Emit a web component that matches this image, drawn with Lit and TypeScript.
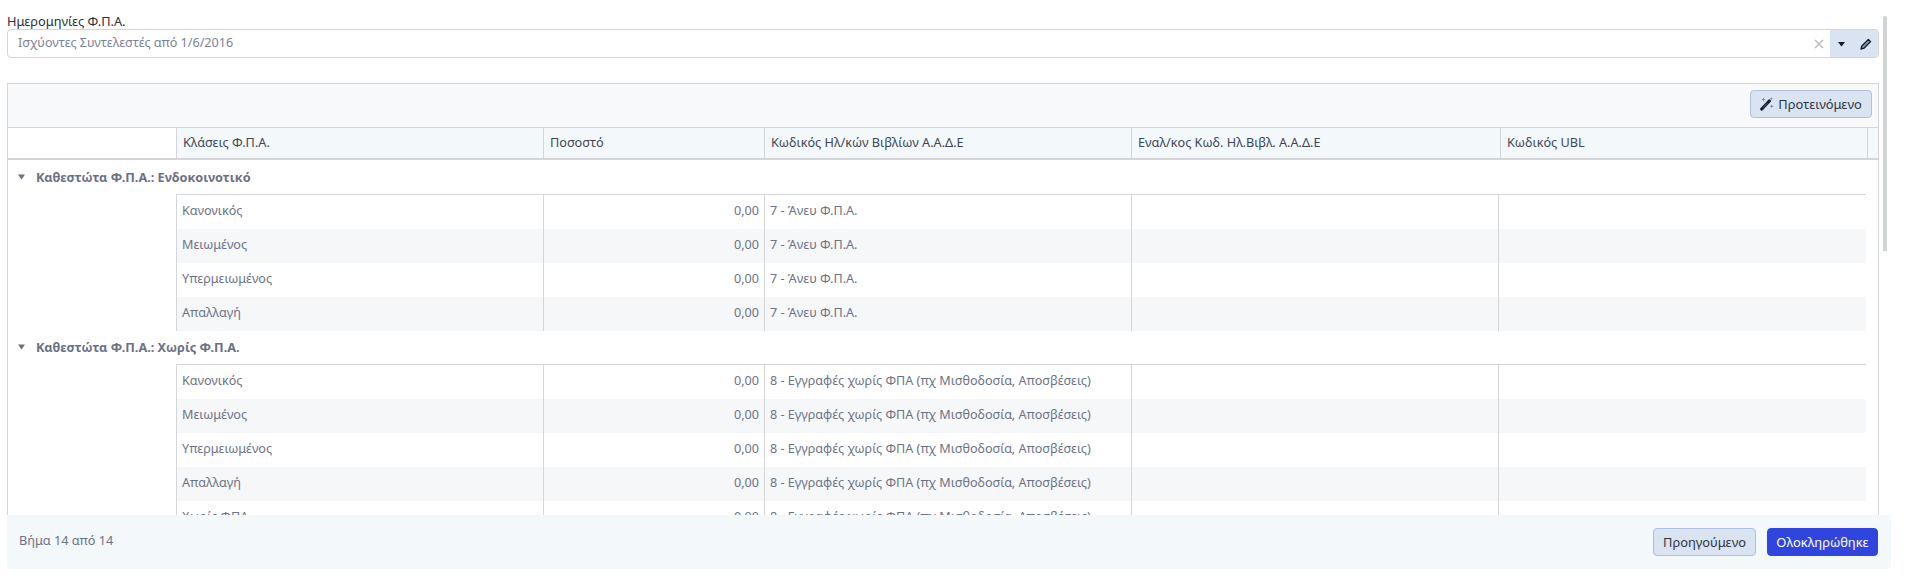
import { LitElement, html, css } from "lit";
import { customElement } from "lit/decorators.js";

const COLS = ["Κλάσεις Φ.Π.Α.", "Ποσοστό", "Κωδικός Ηλ/κών Βιβλίων Α.Α.Δ.Ε", "Εναλ/κος Κωδ. Ηλ.Βιβλ. Α.Α.Δ.Ε", "Κωδικός UBL"];
const GROUPS = [
  { title: "Καθεστώτα Φ.Π.Α.: Ενδοκοινοτικό", code: "7 - Άνευ Φ.Π.Α.", rows: ["Κανονικός", "Μειωμένος", "Υπερμειωμένος", "Απαλλαγή"] },
  { title: "Καθεστώτα Φ.Π.Α.: Χωρίς Φ.Π.Α.", code: "8 - Εγγραφές χωρίς ΦΠΑ (πχ Μισθοδοσία, Αποσβέσεις)", rows: ["Κανονικός", "Μειωμένος", "Υπερμειωμένος", "Απαλλαγή", "Χωρίς ΦΠΑ"] },
];

@customElement("app-root")
export class AppRoot extends LitElement {
  static styles = css`
    :host { display: flex; flex-direction: column; height: 576px; overflow: hidden; position: relative; background: #fff;
      font-family: "Noto Sans", "Open Sans", sans-serif; font-size: 12.6px; color: #6b7385; }
    * { box-sizing: border-box; }
    .main { flex: 1; min-height: 0; overflow: hidden; padding: 12px 29px 0 7px; }
    .label { height: 17px; line-height: 18px; font-size: 12.8px; color: #2b2f36; }
    .input { height: 29px; display: flex; border: 1px solid #d3d5d7; border-radius: 4px; background: #fff; overflow: hidden; }
    .value { flex: 1; padding-left: 10px; line-height: 26px; color: #7a8296; }
    .clear { width: 22px; display: flex; align-items: center; justify-content: center; }
    .addon { width: 48px; background: #d9e3f1; display: flex; align-items: center; justify-content: space-between; padding: 0 6px 0 8px; }
    .table { margin-top: 25px; border: 1px solid #d3d5d7; border-bottom: none; }
    .toolbar { height: 44px; background: #f7f9fa; border-bottom: 1px solid #d3d5d7; display: flex; justify-content: flex-end; align-items: flex-start; padding: 6px 6px 0 0; }
    .btn { display: flex; align-items: center; justify-content: center; gap: 4px; height: 28px; border: 1px solid #aec0e0; border-radius: 4px; background: #d9e3f2; color: #2e3642; font-size: 12.9px; }
    .suggest { width: 122px; }
    .grid { display: grid; grid-template-columns: 367px 221px 367px 369px 367px 11px; }
    .head { display: flex; height: 32px; border-bottom: 2px solid #d3d5d7; margin-bottom: 1px; }
    .spacer { width: 168px; flex: none; }
    .head .grid { flex: 1; background: #f3f8fb; }
    .th { border-left: 1px solid #d3d5d7; padding-left: 6px; line-height: 29px; font-size: 12.7px; color: #3e4654; white-space: nowrap; }
    .group { height: 33px; display: flex; align-items: center; padding: 0 0 2px 10px; gap: 11px; font-weight: 700; font-size: 12.7px; color: #6a7184; }
    .rows { margin-left: 168px; margin-right: 12px; border-top: 1px solid #d3d5d7; }
    .row { height: 34px; }
    .row.alt { background: #f6f7f9; }
    .td { border-left: 1px solid #d3d5d7; padding: 0 5px; line-height: 32px; white-space: nowrap; }
    .num { text-align: right; }
    .rows .grid { grid-template-columns: 367px 221px 367px 367px 1fr; }
    .foot { flex: none; height: 54px; margin: 0 17px 7px 7px; background: #f3f8fb; border-radius: 0 0 4px 4px; display: flex; align-items: center; padding: 0 13px 0 12px; gap: 11px; }
    .step { flex: 1; padding-bottom: 4px; font-size: 12.7px; }
    .prev { width: 103px; }
    .done { width: 111px; background: #2f45de; border-color: #2f45de; color: #fff; }
    .sb { position: absolute; left: 1883px; top: 16px; width: 4px; height: 235px; background: #d0d4d5; border-radius: 2px 2px 0 0; }
  `;

  render() {
    return html`
      <div class="main">
        <div class="label">Ημερομηνίες Φ.Π.Α.</div>
        <div class="input">
          <div class="value">Ισχύοντες Συντελεστές από 1/6/2016</div>
          <div class="clear"><svg width="10" height="10" viewBox="0 0 10 10"><path d="M1 1l8 8M9 1l-8 8" stroke="#b9bcc0" stroke-width="1.5" fill="none"/></svg></div>
          <div class="addon">
            <svg width="8" height="6" viewBox="0 0 8 6"><path d="M0 1h7L3.5 5.5z" fill="#111a2c"/></svg>
            <svg width="12" height="12" viewBox="0 0 12 12"><path d="M1 11l.8-3L8.4 1.4l2.2 2.2L4 10.2z" fill="#7f93b3" stroke="#141c2c" stroke-width="1.3" stroke-linejoin="round"/></svg>
          </div>
        </div>
        <div class="table">
          <div class="toolbar">
            <div class="btn suggest">
              <svg width="14" height="14" viewBox="0 0 14 14">
                <path d="M1.8 12 9.3 4" stroke="#141c2c" stroke-width="3.2" stroke-linecap="round" fill="none"/>
                <path d="M3 10.7 7.5 6" stroke="#3d6ab8" stroke-width="1" fill="none"/>
                <path d="M3.5 .5l.5 1.6 1.6.5-1.6.5-.5 1.6-.5-1.6-1.6-.5 1.6-.5zM11.5 0l.4 1.3 1.3.4-1.3.4-.4 1.3-.4-1.3-1.3-.4 1.3-.4zM11.8 7.3l.5 1.5 1.5.5-1.5.5-.5 1.5-.5-1.5-1.5-.5 1.5-.5z" fill="#6f7a90"/>
              </svg>
              <span>Προτεινόμενο</span>
            </div>
          </div>
          <div class="head">
            <div class="spacer"></div>
            <div class="grid">
              ${COLS.map((c) => html`<div class="th">${c}</div>`)}
              <div class="th"></div>
            </div>
          </div>
          ${GROUPS.map((g) => html`
            <div class="group">
              <svg width="7" height="6" viewBox="0 0 7 6"><path d="M0 .5h7L3.5 5.5z" fill="#6a7184"/></svg>
              <span>${g.title}</span>
            </div>
            <div class="rows">
              ${g.rows.map((r, i) => html`
                <div class="row grid ${i % 2 ? "alt" : ""}">
                  <div class="td">${r}</div>
                  <div class="td num">0,00</div>
                  <div class="td">${g.code}</div>
                  <div class="td"></div>
                  <div class="td"></div>
                </div>`)}
            </div>
          `)}
        </div>
      </div>
      <div class="foot">
        <div class="step">Βήμα 14 από 14</div>
        <div class="btn prev">Προηγούμενο</div>
        <div class="btn done">Ολοκληρώθηκε</div>
      </div>
      <div class="sb"></div>
    `;
  }
}
